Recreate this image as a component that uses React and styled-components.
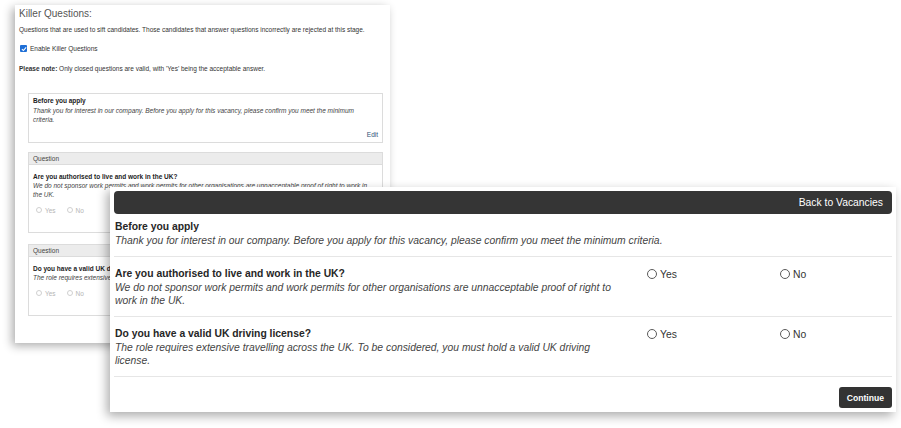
import React from "react";
import styled, { createGlobalStyle } from "styled-components";

const Global = createGlobalStyle`
  html, body { margin: 0; padding: 0; background: #fff; }
  body { font-family: "Liberation Sans", Arial, sans-serif; }
  * { box-sizing: border-box; }
`;

const Stage = styled.div`
  position: relative;
  width: 901px;
  height: 428px;
  overflow: hidden;
  background: #fff;
  padding: 5px 0 0 15px;
`;

/* ---------- back window (admin setup) ---------- */
const BackWindow = styled.section`
  width: 375px;
  height: 338px;
  background: #fff;
  box-shadow: -3px 3px 9px rgba(0, 0, 0, 0.32);
  padding: 3px 0 0 4px;
  font-size: 6.5px;
  color: #333;
`;

const BackHeading = styled.h2`
  margin: 0;
  font-size: 10px;
  font-weight: normal;
  line-height: 12px;
  color: #555;
`;

const SmallLine = styled.p`
  margin: ${(p) => p.$mt || 0}px 0 0;
  line-height: 9px;
`;

const CheckRow = styled.label`
  margin-top: 10px;
  display: flex;
  align-items: center;
  gap: 3px;
  height: 9px;
  padding-left: 1px;
`;

const CheckBox = styled.span`
  width: 7px;
  height: 7px;
  border-radius: 1px;
  background: #1f6fd6;
  display: flex;
  align-items: center;
  justify-content: center;
`;

const Boxes = styled.div`
  margin: 20px 7px 0 9px;
  display: flex;
  flex-direction: column;
`;

const Box = styled.div`
  border: 1px solid #dcdcdc;
  margin-top: ${(p) => p.$mt || 0}px;
`;

const BoxHead = styled.div`
  height: 12px;
  line-height: 12px;
  background: #ececec;
  border-bottom: 1px solid #dcdcdc;
  padding-left: 4px;
  color: #444;
`;

const BoxBody = styled.div`
  padding: ${(p) => p.$pad};
`;

const BoxTitle = styled.div`
  font-weight: bold;
  line-height: ${(p) => p.$lh || 9}px;
  color: #222;
`;

const BoxDesc = styled.div`
  font-style: italic;
  line-height: 9px;
  color: #444;
  padding-right: 4px;
`;

const EditLink = styled.div`
  margin-top: 6px;
  line-height: 9px;
  text-align: right;
  color: #2d4f73;
`;

const MiniRadios = styled.div`
  margin-top: 6px;
  display: flex;
  gap: 11px;
  padding-left: 3px;
  height: 10px;
  align-items: center;
`;

const MiniOption = styled.span`
  display: flex;
  align-items: center;
  gap: 3px;
  color: #b5b5b5;
`;

const MiniCircle = styled.span`
  width: 6px;
  height: 6px;
  border-radius: 50%;
  border: 1px solid #d0d0d0;
`;

/* ---------- front window (candidate view) ---------- */
const FrontWindow = styled.section`
  position: absolute;
  left: 110px;
  top: 187px;
  width: 786px;
  background: #fff;
  padding: 4px;
  box-shadow: -3px 4px 10px rgba(0, 0, 0, 0.33);
  font-size: 10.35px;
  color: #2a2a2a;
`;

const TopBar = styled.header`
  height: 23px;
  background: #353535;
  border-radius: 4px;
  display: flex;
  align-items: center;
  justify-content: flex-end;
  padding-right: 9px;
  color: #fff;
`;

const Intro = styled.div`
  padding: 6px 1px 9px;
  border-bottom: 1px solid #e6e6e6;
`;

const Title = styled.div`
  font-weight: bold;
  line-height: 14px;
  color: #262626;
`;

const Desc = styled.div`
  font-style: italic;
  line-height: 13px;
  color: #444;
`;

const QuestionRow = styled.div`
  display: grid;
  grid-template-columns: 532px 133px 1fr;
  padding: 10px 1px 9px;
  border-bottom: 1px solid #e6e6e6;
`;

const QuestionText = styled.div`
  padding-right: 27px;
`;

const Option = styled.label`
  display: flex;
  align-items: center;
  gap: 3px;
  height: 14px;
  align-self: start;
  color: #333;
`;

const Circle = styled.span`
  width: 10px;
  height: 10px;
  border-radius: 50%;
  border: 1px solid #5a5a5a;
  background: #fff;
`;

const Footer = styled.div`
  display: flex;
  justify-content: flex-end;
  padding-top: 10px;
`;

const ContinueButton = styled.button`
  height: 21px;
  padding: 0 8px;
  border: none;
  border-radius: 3px;
  background: #333;
  color: #fff;
  font-family: "Liberation Sans", Arial, sans-serif;
  font-weight: bold;
  font-size: 8.6px;
`;

const questions = [
  {
    title: "Are you authorised to live and work in the UK?",
    desc: "We do not sponsor work permits and work permits for other organisations are unnacceptable proof of right to work in the UK.",
  },
  {
    title: "Do you have a valid UK driving license?",
    desc: "The role requires extensive travelling across the UK. To be considered, you must hold a valid UK driving license.",
  },
];

const introTitle = "Before you apply";
const introDesc =
  "Thank you for interest in our company. Before you apply for this vacancy, please confirm you meet the minimum criteria.";

export default function App() {
  return (
    <>
      <Global />
      <Stage>
        <BackWindow>
          <BackHeading>Killer Questions:</BackHeading>
          <SmallLine $mt={5}>
            Questions that are used to sift candidates. Those candidates that answer questions incorrectly are rejected at this stage.
          </SmallLine>
          <CheckRow>
            <CheckBox>
              <svg width="6" height="6" viewBox="0 0 10 10">
                <path d="M1.5 5.2 L4 7.6 L8.6 2.4" fill="none" stroke="#fff" strokeWidth="1.8" />
              </svg>
            </CheckBox>
            Enable Killer Questions
          </CheckRow>
          <SmallLine $mt={11}>
            <b>Please note:</b> Only closed questions are valid, with 'Yes' being the acceptable answer.
          </SmallLine>
          <Boxes>
            <Box>
              <BoxBody $pad="2px 4px 3px 4px">
                <BoxTitle $lh={10}>{introTitle}</BoxTitle>
                <BoxDesc>{introDesc}</BoxDesc>
                <EditLink>Edit</EditLink>
              </BoxBody>
            </Box>
            {questions.map((q, i) => (
              <Box key={q.title} $mt={i === 0 ? 9 : 11}>
                <BoxHead>Question</BoxHead>
                <BoxBody $pad="7px 4px 17px 4px">
                  <BoxTitle>{q.title}</BoxTitle>
                  <BoxDesc>{q.desc}</BoxDesc>
                  <MiniRadios>
                    <MiniOption>
                      <MiniCircle />
                      Yes
                    </MiniOption>
                    <MiniOption>
                      <MiniCircle />
                      No
                    </MiniOption>
                  </MiniRadios>
                </BoxBody>
              </Box>
            ))}
          </Boxes>
        </BackWindow>

        <FrontWindow>
          <TopBar>Back to Vacancies</TopBar>
          <Intro>
            <Title>{introTitle}</Title>
            <Desc>{introDesc}</Desc>
          </Intro>
          {questions.map((q) => (
            <QuestionRow key={q.title}>
              <QuestionText>
                <Title>{q.title}</Title>
                <Desc>{q.desc}</Desc>
              </QuestionText>
              <Option>
                <Circle />
                Yes
              </Option>
              <Option>
                <Circle />
                No
              </Option>
            </QuestionRow>
          ))}
          <Footer>
            <ContinueButton>Continue</ContinueButton>
          </Footer>
        </FrontWindow>
      </Stage>
    </>
  );
}
